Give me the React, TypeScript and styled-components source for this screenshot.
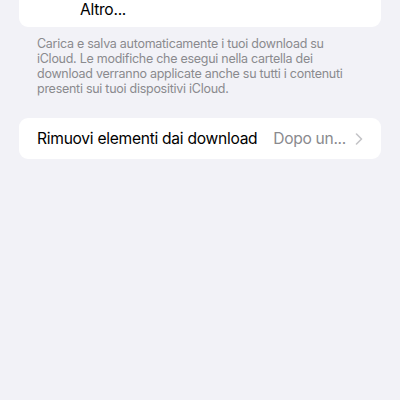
import React from 'react'
import styled, { createGlobalStyle } from 'styled-components'

const GlobalStyle = createGlobalStyle`
  html, body {
    margin: 0;
    padding: 0;
    background: #f2f2f7;
  }

  body {
    font-family: Inter, "Noto Sans", sans-serif;
    -webkit-font-smoothing: antialiased;
  }
`

const Page = styled.div`
  display: flex;
  flex-direction: column;
  min-height: 400px;
  padding: 0 19px;
  background: #f2f2f7;
`

const Group = styled.div<{ $clipped?: boolean }>`
  background: #ffffff;
  border-radius: ${(p) => (p.$clipped ? '0 0 9px 9px' : '9px')};
`

const TopRow = styled.div`
  display: flex;
  align-items: flex-end;
  height: 27px;
  padding: 0 18px 7px 61px;
  box-sizing: border-box;
`

const Row = styled.div`
  display: flex;
  align-items: center;
  height: 41px;
  padding: 0 18px;
`

const Label = styled.span`
  font-size: 15.6px;
  line-height: 20px;
  color: #000000;
  letter-spacing: -0.28px;
  white-space: nowrap;
`

const Detail = styled.span`
  margin-left: auto;
  font-size: 15.6px;
  line-height: 20px;
  color: #8a8a8e;
  letter-spacing: -0.3px;
  white-space: nowrap;
`

const Chevron = styled.svg`
  width: 8px;
  height: 12px;
  margin-left: 9px;
  flex-shrink: 0;
`

const Footer = styled.p`
  margin: 9px 0 22px;
  padding: 0 18px;
  font-size: 12.5px;
  line-height: 15px;
  color: #8a8a8e;
  letter-spacing: -0.27px;
`

export default function App() {
  return (
    <>
      <GlobalStyle />
      <Page>
        <Group $clipped>
          <TopRow>
            <Label>Altro...</Label>
          </TopRow>
        </Group>
        <Footer>
          Carica e salva automaticamente i tuoi download su iCloud. Le modifiche che esegui nella cartella dei
          download verranno applicate anche su tutti i contenuti presenti sui tuoi dispositivi iCloud.
        </Footer>
        <Group>
          <Row>
            <Label>Rimuovi elementi dai download</Label>
            <Detail>Dopo un...</Detail>
            <Chevron viewBox="0 0 8 12">
              <path d="M1.5 1 L6.5 6 L1.5 11" fill="none" stroke="#c4c4c7" strokeWidth="1.6" strokeLinecap="round" strokeLinejoin="round" />
            </Chevron>
          </Row>
        </Group>
      </Page>
    </>
  )
}
